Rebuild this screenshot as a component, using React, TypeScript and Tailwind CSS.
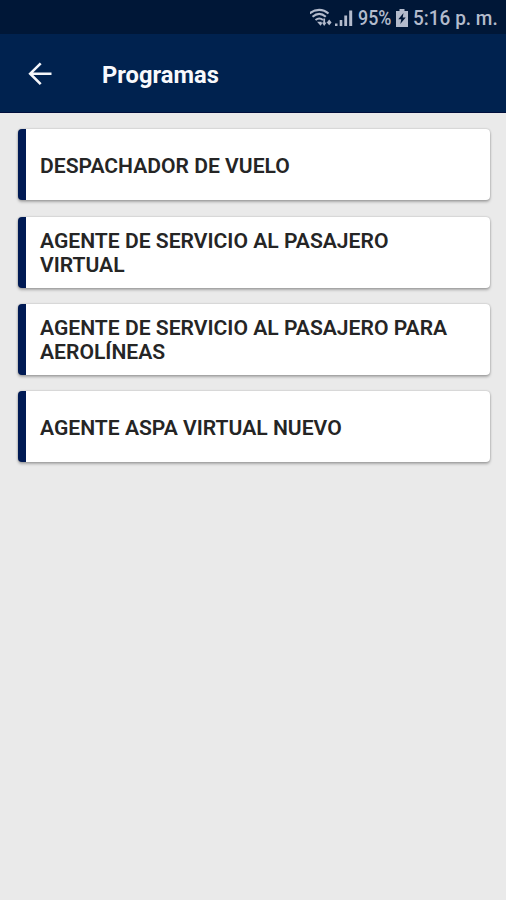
const programas = [
  "DESPACHADOR DE VUELO",
  "AGENTE DE SERVICIO AL PASAJERO VIRTUAL",
  "AGENTE DE SERVICIO AL PASAJERO PARA AEROLÍNEAS",
  "AGENTE ASPA VIRTUAL NUEVO",
];

function StatusBar() {
  return (
    <div className="h-[34px] bg-[#001737] text-[#b3bbcc] flex items-center justify-end pr-[8px] pt-[2px]">
      <svg className="w-[24px] h-[20px] shrink-0" viewBox="0 0 24 20" fill="none" stroke="currentColor" strokeWidth="2.100">
        <path d="M-.5 5.500C5.500.6 13 .6 18.500 5.500" />
        <path d="M2.500 8.800C6.800 5.200 11.700 5.200 15.800 8.800" />
        <path d="M5.500 12C8 10 10.600 10 13 12" />
        <path d="M7 13.800l3.500 4 1.500-2-.5-2z" fill="currentColor" stroke="none" />
        <path d="M11.800 14.500h4.800l-2.400 3.500zM13.300 10.500h1.800v5h-1.800zM16.800 14.500 19.200 11.500 21.600 14.500 19.200 17.200z" fill="currentColor" stroke="none" />
      </svg>
      <svg className="w-[18px] h-[18px] shrink-0 ml-[1px]" viewBox="0 0 18 18" fill="currentColor">
        <path d="M0 14.500h2.500V17H0zM4.700 11h2.600v6H4.700zM9.300 6.500h2.800V17H9.300zM14.200 1.500h3V17h-3z" />
      </svg>
      <span className="w-[36px] ml-[5px] text-[21px] leading-[24px] font-medium whitespace-nowrap">
        <span className="inline-block origin-left scale-x-[0.85]">95%</span>
      </span>
      <svg className="w-[12px] h-[18px] shrink-0 ml-[2px]" viewBox="0 0 12 18">
        <path d="M3.500 0h5v2H12v16H0V2h3.500z" fill="currentColor" />
        <path d="M7.500 4 2.300 10.300h3L4.300 15l5.400-6.500h-3z" fill="#001737" />
      </svg>
      <span className="w-[85px] ml-[5px] text-[21px] leading-[24px] font-medium whitespace-nowrap">
        <span className="inline-block origin-left scale-x-[0.905]">5:16 p. m.</span>
      </span>
    </div>
  );
}

function Header() {
  return (
    <header className="h-[79px] bg-[#00224f] border-b border-[#000f3c] flex items-center">
      <button className="ml-[28px] text-[#f4f6fa]" aria-label="Volver">
        <svg className="w-[24px] h-[24px]" viewBox="0 0 24 24" fill="none" stroke="currentColor" strokeWidth="2.600">
          <path d="M23.500 12.700H2M12.700 2.300 2.200 12.700l10.500 10.400" />
        </svg>
      </button>
      <h1 className="ml-[50px] pt-[4px] text-[23.700px] leading-[28px] font-bold text-[#f8f9fc] whitespace-nowrap">Programas</h1>
    </header>
  );
}

function ProgramaCard({ nombre }: { nombre: string }) {
  return (
    <div className="h-[71px] bg-white rounded-[4px] border-l-[8px] border-[#001a54] flex items-center pl-[14.500px] pr-[30px] pt-[2px] shadow-[0_2px_3px_rgba(0,0,0,0.28),0_0_2px_rgba(0,0,0,0.25)]">
      <p className="text-[21.100px] leading-[24.500px] font-semibold text-[#252525]">{nombre}</p>
    </div>
  );
}

export default function App() {
  return (
    <div className="w-full h-[900px] overflow-hidden bg-[#eaeaea] font-['Roboto',sans-serif]">
      <StatusBar />
      <Header />
      <main className="flex flex-col gap-[16.300px] pl-[17.500px] pr-4 pt-[16.400px]">
        {programas.map((nombre) => (
          <ProgramaCard key={nombre} nombre={nombre} />
        ))}
      </main>
    </div>
  );
}
